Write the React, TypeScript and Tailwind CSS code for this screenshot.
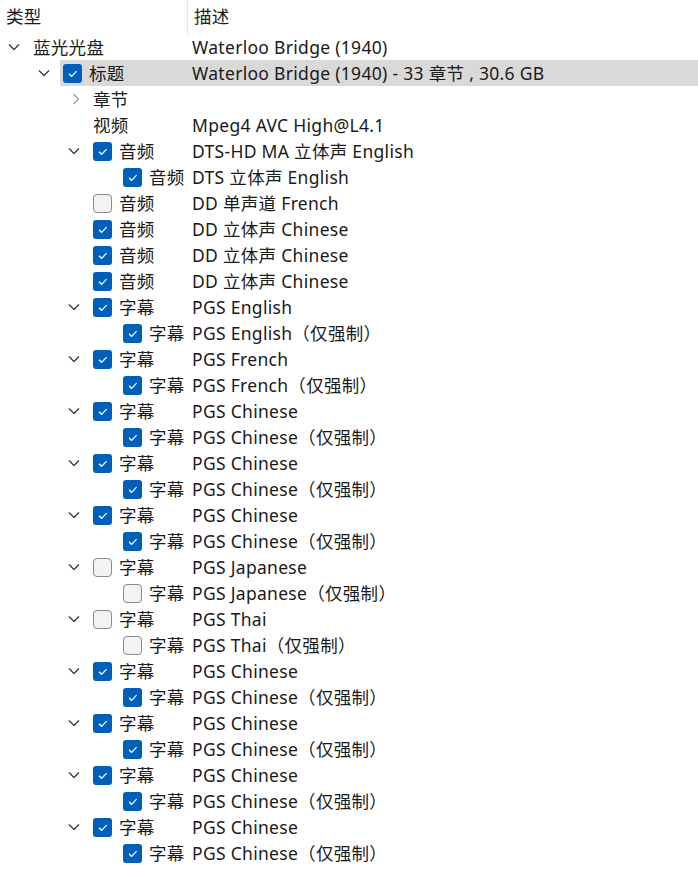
import React from 'react'

type Row = {
    level: number
    chevron?: 'down' | 'right'
    checked?: boolean
    name: string
    desc: string
    selected?: boolean
}

const audio = (level: number, checked: boolean, desc: string, chevron?: 'down'): Row => ({
    level,
    checked,
    name: '音频',
    desc,
    chevron,
})

// subtitle track + its "forced only" child
const subtitle = (lang: string, checked = true): Row[] => [
    { level: 2, chevron: 'down', checked, name: '字幕', desc: `PGS ${lang}` },
    { level: 3, checked, name: '字幕', desc: `PGS ${lang}（仅强制）` },
]

const rows: Row[] = [
    { level: 0, chevron: 'down', name: '蓝光光盘', desc: 'Waterloo Bridge (1940)' },
    { level: 1, chevron: 'down', checked: true, name: '标题', desc: 'Waterloo Bridge (1940) - 33 章节 , 30.6 GB', selected: true },
    { level: 2, chevron: 'right', name: '章节', desc: '' },
    { level: 2, name: '视频', desc: 'Mpeg4 AVC High@L4.1' },
    audio(2, true, 'DTS-HD MA 立体声 English', 'down'),
    audio(3, true, 'DTS 立体声 English'),
    audio(2, false, 'DD 单声道 French'),
    audio(2, true, 'DD 立体声 Chinese'),
    audio(2, true, 'DD 立体声 Chinese'),
    audio(2, true, 'DD 立体声 Chinese'),
    ...subtitle('English'),
    ...subtitle('French'),
    ...subtitle('Chinese'),
    ...subtitle('Chinese'),
    ...subtitle('Chinese'),
    ...subtitle('Japanese', false),
    ...subtitle('Thai', false),
    ...subtitle('Chinese'),
    ...subtitle('Chinese'),
    ...subtitle('Chinese'),
    ...subtitle('Chinese'),
    // next row, only the top edge of its checkbox is in view
    { level: 2, chevron: 'down', checked: false, name: '', desc: '' },
]

const indent = ['pl-0', 'pl-[30px]', 'pl-[60px]', 'pl-[90px]']
const nameWidth = ['w-[162px]', 'w-[132px]', 'w-[102px]', 'w-[72px]']

function Chevron({ dir }: { dir?: 'down' | 'right' }) {
    if (dir === 'down') {
        return (
            <svg width="12" height="8" viewBox="0 0 12 8" className="ml-[8px]">
                <path d="M1 1.5 L6 6.5 L11 1.5" fill="none" stroke="#3a3a3a" strokeWidth="1.3" />
            </svg>
        )
    }
    if (dir === 'right') {
        return (
            <svg width="8" height="12" viewBox="0 0 8 12" className="ml-[12px]">
                <path d="M1.5 1 L6.5 6 L1.5 11" fill="none" stroke="#9a9a9a" strokeWidth="1.3" />
            </svg>
        )
    }
    return null
}

function Checkbox({ checked }: { checked: boolean }) {
    if (!checked) {
        return <div className="w-[19px] h-[19px] shrink-0 rounded-[4px] border border-[#8a8a8a] bg-[#f3f3f3]" />
    }
    return (
        <div className="w-[19px] h-[19px] shrink-0 rounded-[3px] bg-[#005fb8] flex items-center justify-center">
            <svg width="19" height="19" viewBox="0 0 19 19">
                <path d="M6 9.8 L8.6 12.3 L13.6 7.2" fill="none" stroke="#ffffff" strokeWidth="1.2" />
            </svg>
        </div>
    )
}

export default function App() {
    return (
        <div
            className="w-[698px] h-[870px] overflow-hidden bg-white text-[#1a1a1a] text-[17.5px] tracking-[0.3px] leading-none"
            style={{ fontFamily: '"Noto Sans", "Noto Sans CJK SC", sans-serif' }}
        >
            {/* Header */}
            <div className="flex h-[34px] items-center">
                <div className="w-[187px] pl-[6px]">类型</div>
                <div className="w-px h-[34px] bg-[#e5e5e5]" />
                <div className="pl-[6px]">描述</div>
            </div>

            {/* Tree */}
            <div className="flex flex-col">
                {rows.map((row, i) => (
                    <div key={i} className={`flex h-[26px] items-center ${indent[row.level]}`}>
                        <div className="w-[30px] shrink-0 flex items-center">
                            <Chevron dir={row.chevron} />
                        </div>
                        <div className={`flex flex-1 h-full items-center ${row.selected ? 'bg-[#d9d9d9]' : ''}`}>
                            <div className={`flex items-center shrink-0 pl-[3px] whitespace-nowrap ${nameWidth[row.level]}`}>
                                {row.checked !== undefined && (
                                    <div className="mr-[7px]">
                                        <Checkbox checked={row.checked} />
                                    </div>
                                )}
                                <span className="pt-[2px]">{row.name}</span>
                            </div>
                            <span className="pt-[2px] whitespace-nowrap">{row.desc}</span>
                        </div>
                    </div>
                ))}
            </div>
        </div>
    )
}
